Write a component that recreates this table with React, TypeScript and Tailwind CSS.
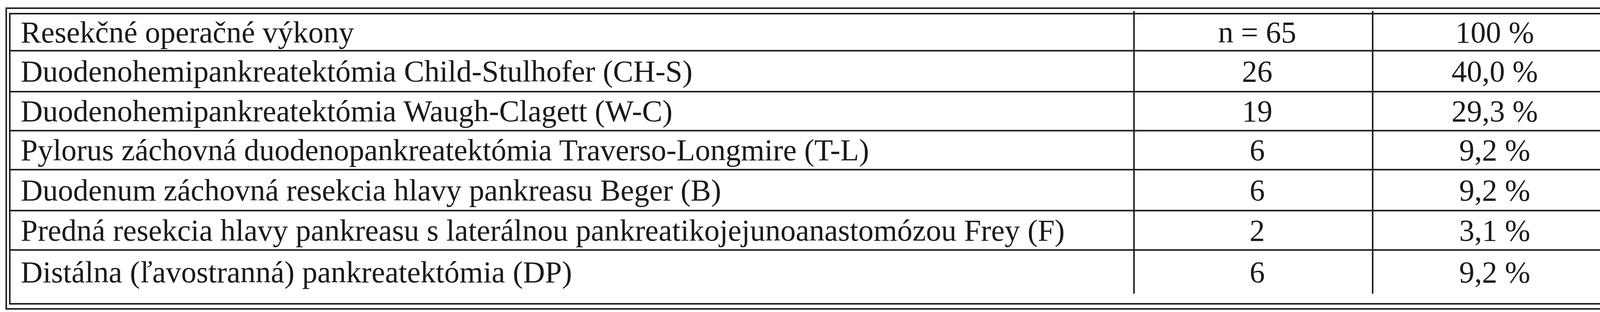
import React from "react";

const rows: { label: string; n: string; p: string; h: string }[] = [
  { label: "Resekčné operačné výkony", n: "n = 65", p: "100 %", h: "h-[91px]" },
  { label: "Duodenohemipankreatektómia Child-Stulhofer (CH-S)", n: "26", p: "40,0 %", h: "h-[105px]" },
  { label: "Duodenohemipankreatektómia Waugh-Clagett (W-C)", n: "19", p: "29,3 %", h: "h-[100px]" },
  { label: "Pylorus záchovná duodenopankreatektómia Traverso-Longmire (T-L)", n: "6", p: "9,2 %", h: "h-[100px]" },
  { label: "Duodenum záchovná resekcia hlavy pankreasu Beger (B)", n: "6", p: "9,2 %", h: "h-[105px]" },
  { label: "Predná resekcia hlavy pankreasu s laterálnou pankreatikojejunoanastomózou Frey (F)", n: "2", p: "3,1 %", h: "h-[101px]" },
  { label: "Distálna (ľavostranná) pankreatektómia (DP)", n: "6", p: "9,2 %", h: "h-[114px]" },
];

export default function App() {
  return (
    <div className="w-[4151px] h-[800px] bg-white pt-[19px] pl-[14px] text-[#1a1a1a] [font-family:'Liberation_Serif','Times_New_Roman',serif]">
      <div className="w-[4117px] h-[775px] border-4 border-[#231f20] pt-[10px] pl-[5px] pr-[10px] pb-[9px]">
        <div className="relative w-full h-full border-4 border-[#231f20] flex flex-col">
          <div className="absolute top-[-9px] left-[2874px] w-[4px] h-[9px] bg-[#231f20]" />
          <div className="absolute top-[-9px] left-[3485px] w-[4px] h-[9px] bg-[#231f20]" />
          {rows.map((r, i) => (
            <div
              key={i}
              className={`flex shrink-0 ${r.h} ${i > 0 ? "border-t-4 border-[#231f20]" : ""}`}
            >
              <div className="w-[2874px] shrink-0 flex items-center pl-[26px] text-[78px] leading-none whitespace-nowrap">
                {r.label}
              </div>
              <div className="w-[611px] shrink-0 border-l-4 border-[#231f20] flex items-center justify-center text-[78px] leading-none pl-[20px]">
                {r.n}
              </div>
              <div className="w-[601px] shrink-0 border-l-4 border-[#231f20] flex items-center justify-center text-[78px] leading-none pl-[24px]">
                {r.p}
              </div>
            </div>
          ))}
        </div>
      </div>
    </div>
  );
}
